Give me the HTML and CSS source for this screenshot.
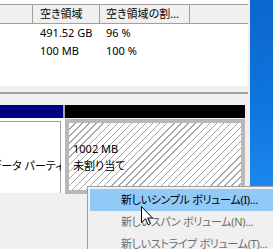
FILE: index.html
```html
<!DOCTYPE html>
<html lang="ja">
<head>
    <meta charset="UTF-8">
    <title>ディスクの管理</title>
    <link rel="stylesheet" href="styles.css">
</head>
<body>
    <div class="screen">
        <div class="window">
            <!-- Liste des volumes -->
            <div class="list">
                <div class="list-head">
                    <div class="hcell c1"></div>
                    <div class="hcell c2">空き領域</div>
                    <div class="hcell c3">空き領域の割...</div>
                    <div class="hcell c4"></div>
                </div>
                <div class="row">
                    <div class="cell c1"></div>
                    <div class="cell c2">491.52 GB</div>
                    <div class="cell c3">96 %</div>
                </div>
                <div class="row">
                    <div class="cell c1"></div>
                    <div class="cell c2">100 MB</div>
                    <div class="cell c3">100 %</div>
                </div>
            </div>

            <div class="splitter"></div>

            <!-- Vue graphique du disque -->
            <div class="graph">
                <div class="part data">
                    <div class="bar"></div>
                    <div class="body">
                        <div class="line"></div>
                        <div class="line"></div>
                        <div class="line shifted">データ パーティシ</div>
                    </div>
                </div>
                <div class="part free">
                    <div class="bar"></div>
                    <div class="body">
                        <div class="line"></div>
                        <div class="line">1002 MB</div>
                        <div class="line">未割り当て</div>
                    </div>
                </div>
            </div>
        </div>
        <div class="desktop"></div>

        <!-- Menu contextuel -->
        <div class="menu">
            <div class="item active">新しいシンプル ボリューム(I)...</div>
            <div class="item disabled">新しいスパン ボリューム(N)...</div>
            <div class="item disabled">新しいストライプ ボリューム(T)...</div>
        </div>

        <svg class="cursor" width="13" height="20" viewBox="0 0 13 20">
            <path d="M0.5 0.5 L0.5 16.5 L4.5 12.8 L7.2 18.8 L9.4 17.8 L6.8 12 L11.5 12 Z" fill="#fff" stroke="#000" stroke-width="1"/>
        </svg>
    </div>
</body>
</html>
```

FILE: styles.css
```css
* {
    box-sizing: border-box;
}

body {
    margin: 0;
    width: 273px;
    height: 249px;
    overflow: hidden;
    font-family: "Noto Sans", "Noto Sans CJK JP", sans-serif;
    font-size: 11px;
    font-feature-settings: "palt";
    color: #000;
}

.screen {
    display: flex;
    height: 249px;
    position: relative;
    overflow: hidden;
}

.window {
    width: 250px;
    background-color: #f0f0f0;
    display: flex;
    flex-direction: column;
}

.desktop {
    flex: 1;
    background: linear-gradient(175deg, #0b66cc 0%, #0f76e0 45%, #1c88ee 75%, #3a9ff2 100%);
}

/* Liste */
.list {
    background-color: #fff;
    height: 86px;
    padding-top: 4px;
    margin-right: 2px;
}

.list-head {
    display: flex;
    height: 20px;
    background-color: #f0f0f0;
    border-top: 1px solid #a0a0a0;
    border-bottom: 1px solid #a0a0a0;
}

.hcell {
    border-right: 1px solid #a0a0a0;
    line-height: 18px;
    white-space: nowrap;
    overflow: hidden;
}

.hcell.c4 {
    border-right: none;
}

.row {
    display: flex;
    height: 18px;
    line-height: 18px;
}

.cell {
    white-space: nowrap;
}

.c1 {
    width: 33px;
}

.c2 {
    width: 67px;
    padding-left: 7px;
}

.c3 {
    width: 90px;
    padding-left: 6px;
}

.c4 {
    flex: 1;
}

.splitter {
    height: 8px;
    margin-right: 2px;
    border-bottom: 2px solid #a0a0a0;
}

/* Vue graphique */
.graph {
    display: flex;
    padding-top: 11px;
    padding-right: 5px;
}

.part {
    display: flex;
    flex-direction: column;
}

.bar {
    height: 13px;
}

.data {
    width: 65px;
}

.data .bar {
    background-color: #000080;
    border-right: 2px solid #a8a8a8;
}

.data .body {
    height: 75px;
    background-color: #fff;
    border-top: 3px solid #fff;
    border-right: 4px solid #fff;
    box-shadow: inset 0 1px 0 #a0a0a0, inset -1px 0 0 #a0a0a0;
    padding-top: 2px;
    overflow: hidden;
}

.free {
    flex: 1;
}

.free .bar {
    background-color: #000;
}

.free .body {
    height: 75px;
    margin-top: 1px;
    border: 4px solid #b8b8b8;
    padding: 0 4px;
    background-color: #fff;
    background-image: repeating-linear-gradient(135deg, #fff 0, #fff 4px, #a8a8a8 4px, #a8a8a8 5px);
}

.line {
    height: 17px;
    line-height: 17px;
    white-space: nowrap;
}

.shifted {
    margin-left: -9px;
}

/* Menu contextuel */
.menu {
    position: absolute;
    left: 87px;
    top: 186px;
    width: 200px;
    background-color: #f0f0f0;
    border: 1px solid #a0a0a0;
    padding: 2px;
}

.item {
    height: 22px;
    line-height: 22px;
    padding-left: 31px;
    white-space: nowrap;
    letter-spacing: -0.3px;
}

.item.active {
    background-color: #91c9f7;
}

.item.disabled {
    color: #6d6d6d;
}

.cursor {
    position: absolute;
    left: 141px;
    top: 206px;
}
```
